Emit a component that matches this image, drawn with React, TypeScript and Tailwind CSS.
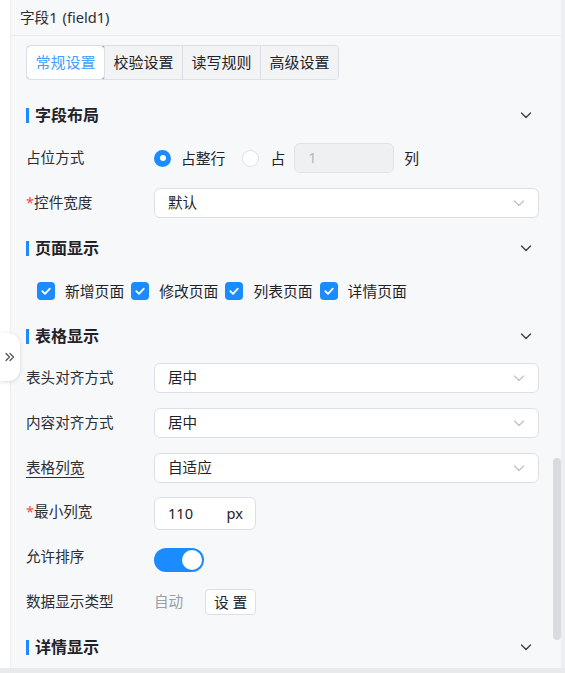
import React from "react";

const FONT = {
  fontFamily: '"Noto Sans", "Noto Sans CJK SC", sans-serif',
};

function Chevron({ className = "" }: { className?: string }) {
  return (
    <svg viewBox="0 0 14 14" className={className} fill="none">
      <path d="M2.5 5 L7 9.5 L11.5 5" stroke="currentColor" strokeWidth="1.4" strokeLinecap="round" strokeLinejoin="round" />
    </svg>
  );
}

function SectionTitle({ title, className = "" }: { title: string; className?: string }) {
  return (
    <div className={`flex h-[24px] items-center justify-between pr-[6px] ${className}`}>
      <div className="flex items-center">
        <span className="h-[15px] w-[3px] bg-[#1a8cff]" />
        <span className="ml-[6px] text-[16px] font-bold text-[#1f2329]">{title}</span>
      </div>
      <Chevron className="h-[14px] w-[14px] text-[#3b3f45]" />
    </div>
  );
}

function Label({ text, required, underline }: { text: string; required?: boolean; underline?: boolean }) {
  return (
    <div className="w-[128px] shrink-0 text-[14.6px] leading-[28px] text-[#2b2e33]">
      {required && <span className="text-[#f5454f]">*</span>}
      <span className={underline ? "underline underline-offset-[4px] decoration-[#2b2e33]" : ""}>{text}</span>
    </div>
  );
}

function Select({ value }: { value: string }) {
  return (
    <div className="flex h-[30px] flex-1 items-center justify-between rounded-[6px] border border-[#dcdfe6] bg-white pl-[13px] pr-[12px]">
      <span className="text-[14.6px] text-[#1f2329]">{value}</span>
      <Chevron className="h-[14px] w-[14px] text-[#c0c4cc]" />
    </div>
  );
}

function Check({ label }: { label: string }) {
  return (
    <div className="flex items-center">
      <span className="flex h-[18px] w-[18px] items-center justify-center rounded-[4px] bg-[#1a8cff]">
        <svg viewBox="0 0 12 12" className="h-[12px] w-[12px]" fill="none">
          <path d="M2.3 6.2 L5 8.8 L9.8 3.6" stroke="white" strokeWidth="1.8" strokeLinecap="round" strokeLinejoin="round" />
        </svg>
      </span>
      <span className="ml-[10px] text-[14.8px] text-[#1f2329]">{label}</span>
    </div>
  );
}

export default function App() {
  const tabs = ["常规设置", "校验设置", "读写规则", "高级设置"];
  return (
    <div className="relative flex h-[673px] w-[565px] flex-col overflow-hidden bg-white" style={FONT}>
      <div className="flex min-h-0 flex-1">
        {/* left gutter */}
        <div className="w-[10px] shrink-0 bg-white" />

        {/* settings panel */}
        <div className="relative flex min-w-0 flex-1 flex-col border-l border-[#eceef1] bg-[#f7f8fa]">
          <div className="flex h-[36px] shrink-0 items-center border-b border-[#e9ebee] pl-[9px] text-[14.6px] text-[#2b2e33]">
            <span>字段1</span>
            <span className="ml-[5px]">(field1)</span>
          </div>

          <div className="flex flex-col pl-[15px] pr-[22px]">
            {/* tabs */}
            <div className="mt-[9px] flex h-[35px] w-fit overflow-hidden rounded-[4px] border border-[#dcdfe6]">
              {tabs.map((t, i) => (
                <div
                  key={t}
                  className={
                    i === 0
                      ? "-m-px flex w-[79px] items-center justify-center rounded-[4px] border border-[#409eff] bg-white text-[15px] text-[#409eff]"
                      : "flex w-[78px] items-center justify-center border-l border-[#dcdfe6] bg-[#f2f3f5] text-[15px] text-[#1f2329]"
                  }
                >
                  {t}
                </div>
              ))}
            </div>

            <SectionTitle title="字段布局" className="mt-[23px]" />

            {/* placement */}
            <div className="mt-[16px] flex items-start">
              <Label text="占位方式" />
              <div className="flex h-[30px] items-center">
                <span className="flex h-[17px] w-[17px] items-center justify-center rounded-full bg-[#1a8cff]">
                  <span className="h-[6px] w-[6px] rounded-full bg-white" />
                </span>
                <span className="ml-[10px] text-[14.8px] text-[#1f2329]">占整行</span>
                <span className="ml-[17px] h-[17px] w-[17px] rounded-full border border-[#dcdfe6] bg-white" />
                <span className="ml-[11px] text-[14.8px] text-[#1f2329]">占</span>
                <div className="ml-[9px] flex h-[30px] w-[100px] items-center rounded-[6px] border border-[#e1e3e8] bg-[#eff0f2] pl-[13px] text-[14.6px] text-[#b4b8bf]">
                  1
                </div>
                <span className="ml-[10px] text-[14.8px] text-[#1f2329]">列</span>
              </div>
            </div>

            <div className="mt-[15px] flex items-start">
              <Label text="控件宽度" required />
              <Select value="默认" />
            </div>

            <SectionTitle title="页面显示" className="mt-[18px]" />

            <div className="mt-[19px] flex h-[24px] items-center gap-[7px] pl-[11px]">
              <Check label="新增页面" />
              <Check label="修改页面" />
              <Check label="列表页面" />
              <Check label="详情页面" />
            </div>

            <SectionTitle title="表格显示" className="mt-[21px]" />

            <div className="mt-[15px] flex items-start">
              <Label text="表头对齐方式" />
              <Select value="居中" />
            </div>
            <div className="mt-[15px] flex items-start">
              <Label text="内容对齐方式" />
              <Select value="居中" />
            </div>
            <div className="mt-[15px] flex items-start">
              <Label text="表格列宽" underline />
              <Select value="自适应" />
            </div>

            <div className="mt-[14px] flex items-start">
              <Label text="最小列宽" required />
              <div className="flex h-[33px] w-[102px] items-center justify-between rounded-[6px] border border-[#dcdfe6] bg-white pl-[13px] pr-[12px] text-[14.6px] text-[#1f2329]">
                <span>110</span>
                <span>px</span>
              </div>
            </div>

            <div className="mt-[12px] flex items-start">
              <Label text="允许排序" />
              <div className="mt-[6px] flex h-[24px] w-[50px] items-center justify-end rounded-full bg-[#1a8cff] pr-[2px]">
                <span className="h-[20px] w-[20px] rounded-full bg-white" />
              </div>
            </div>

            <div className="mt-[15px] flex items-start">
              <Label text="数据显示类型" />
              <div className="flex h-[30px] items-center">
                <span className="text-[14.6px] text-[#9a9ea5]">自动</span>
                <div className="ml-[22px] flex h-[26px] w-[51px] items-center justify-center rounded-[4px] border border-[#dcdfe6] bg-white text-[14.8px] text-[#1f2329]">
                  设 置
                </div>
              </div>
            </div>

            <SectionTitle title="详情显示" className="mt-[18px]" />
          </div>

          {/* scrollbar thumb */}
          <div className="absolute right-[0px] top-[458px] h-[182px] w-[8px] rounded-full bg-[#d9dbdf]" />
        </div>

        {/* right edge */}
        <div className="w-[4px] shrink-0 bg-[#eceef1]" />
      </div>

      {/* bottom edge */}
      <div className="h-[5px] shrink-0 bg-[#e9eaec]" />

      {/* collapse handle */}
      <div className="absolute left-0 top-[333px] flex h-[48px] w-[20px] items-center justify-center rounded-r-[12px] bg-white shadow-[0_1px_4px_rgba(0,0,0,0.15)]">
        <svg viewBox="0 0 12 12" className="h-[12px] w-[12px]" fill="none">
          <path d="M2 2.5 L5.5 6 L2 9.5 M6 2.5 L9.5 6 L6 9.5" stroke="#4a4e55" strokeWidth="1.2" strokeLinecap="round" strokeLinejoin="round" />
        </svg>
      </div>
    </div>
  );
}
